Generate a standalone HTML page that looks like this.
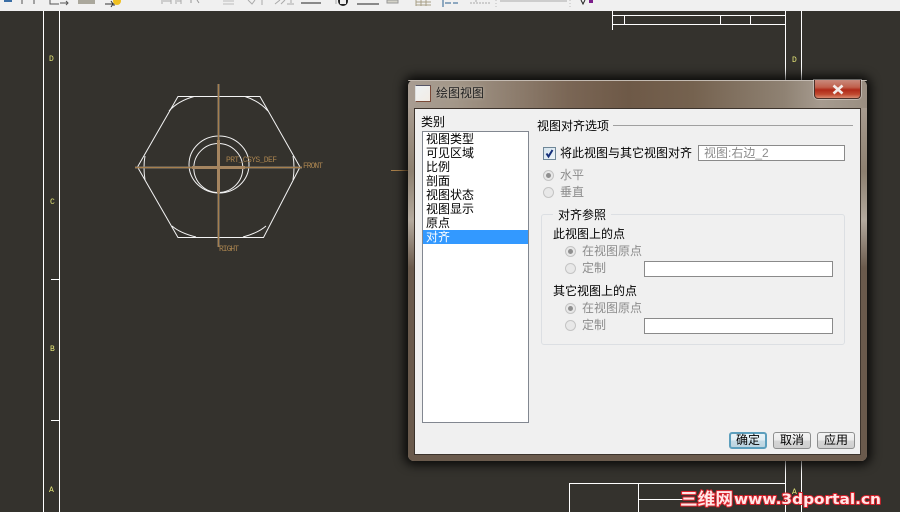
<!DOCTYPE html>
<html><head><meta charset="utf-8">
<style>
html,body{margin:0;padding:0;background:#34322d}
#p{position:relative;width:900px;height:512px;overflow:hidden;background:#34322d;font-family:"Liberation Sans","WenQuanYi Zen Hei","Noto Sans CJK SC",sans-serif;font-size:12px;line-height:14px;color:#000}
.a{position:absolute;white-space:nowrap}
.g{color:#8c8c8c}
.r{position:absolute;width:11px;height:11px;border-radius:50%;box-sizing:border-box;border:1px solid #c4c4c4;background:#e8e8e8}
.r.on::after{content:"";position:absolute;left:2px;top:2px;width:5px;height:5px;border-radius:50%;background:#8f8f8f}
.i{position:absolute;height:15px;box-sizing:border-box;background:#fff;border:1px solid #8a8a8a}
.b{position:absolute;top:432px;height:17px;box-sizing:border-box;border:1px solid #8e8f8f;border-radius:3px;background:linear-gradient(#f4f4f4 0,#ebebeb 50%,#d6d6d6 51%,#cfcfcf 100%);text-align:center;line-height:15px}
</style></head><body><div id="p">

<div class="a" style="left:0;top:0;width:900px;height:11px;background:#f0f0f0"></div>
<svg class="a" style="left:0;top:0" width="900" height="512" viewBox="0 0 900 512" fill="none">
<g stroke="#777" stroke-width="1">
<path d="M22 0v4M34 0v4M50 0v4H59M60 3h8M66 1l2 2-2 2" stroke="#555"/>
<rect x="78" y="0" width="17" height="4" fill="#aaa79c" stroke="none"/>
<path d="M105 4h8M111 1l2 3-2 3M114 1v5" stroke="#333"/>
<path d="M162 0v4M171 0v4M176 0v4M181 0v4M163 1h8M177 1h4" stroke="#aaa"/>
<path d="M191 0v3M197 0l2 3" stroke="#999"/>
<path d="M223 1h11M223 4h11" stroke="#bbb"/>
<path d="M248 0l4 4 3-4M262 0v5" stroke="#aaa"/>
<path d="M275 4l5-4M281 4l4-4M287 4h7M291 0v3" stroke="#aaa"/>
<path d="M301 3h20" stroke="#222"/>
<path d="M336 0v4" stroke="#aaa"/>
<path d="M357 4h22" stroke="#222"/>
<rect x="387" y="0" width="11" height="3" fill="#d4d2c8" stroke="#999"/>
<path d="M416 0v6M421 0v6M426 0v6M416 2h15M416 5h15" stroke="#a89f86"/>
<path d="M443 0v7M445 3h6M453 3h5" stroke="#2a5f90"/>
<path d="M470 3h20M476 0v2" stroke="#aaa" stroke-dasharray="2 1"/>
<path d="M496 0v9M570 0v9" stroke="#bbb" stroke-dasharray="1 2"/>
<path d="M500 1h67" stroke="#aaa"/>
<path d="M581 0l2 4 2-4" stroke="#222"/>
</g>
<circle cx="343" cy="1" r="5" fill="#222" stroke="none"/>
<rect x="340" y="0" width="6" height="4" fill="#eee"/>
<circle cx="117" cy="1" r="4" fill="#f0c020"/>
<rect x="589" y="0" width="4" height="3" fill="#7b1d8a"/>
<rect x="4" y="0" width="8" height="2" fill="#3a6ea5"/>

<g stroke="#fff" stroke-width="1">
<path d="M43.500 11V512M59.500 11V512M51 279.500H59M51 420.500H59"/>
<path d="M785.500 11V80M801.500 11V80M785.500 460V512M801.500 460V512"/>
<path d="M612.500 11V30M612.500 15.500H785M612.500 24.500H785M624.500 15V24M720.500 15V24M750.500 15V24"/>
<path d="M569.500 483V512M569.500 483.500H785M638.500 483V512M638.500 499.500H690"/>
</g>
<g fill="#e8e878" font-family="Liberation Mono" font-size="8">
<text x="49" y="61">D</text><text x="50" y="204">C</text><text x="50" y="351">B</text><text x="49" y="492">A</text>
<text x="792" y="62">D</text><text x="792" y="494">A</text>
</g>
<path d="M391 170.500H408" stroke="#a87f4a"/>

<g stroke="#f4f4f4" stroke-width="1">
<path d="M178 96.500H260L300 167 263.500 237.500H178L137.500 167Z"/>
<path d="M169 111Q178 101 194 96.500M245 96.500Q259 101 268 111"/>
<path d="M145 156Q143 167 145 180M293 156Q295 167 293 180"/>
<path d="M172 226Q180 233 196 237M243 237Q258 233 266 226"/>
<ellipse cx="219" cy="164.500" rx="30" ry="28.500"/>
<ellipse cx="218.300" cy="168" rx="24.500" ry="24.500"/>
</g>
<g>
<path d="M218.500 84V247M135 167.500H302" stroke="#8d8070" stroke-width="2"/>
<path d="M218.500 84V247M135 167.500H302" stroke="#a67f4d" stroke-width="1"/>
<path d="M218.500 140V193M192 167.500H245" stroke="#a58560" stroke-width="3"/>
</g>
<g fill="#a8834f" font-family="Liberation Mono" font-size="8">
<text x="226" y="162" textLength="51">PRT_CSYS_DEF</text>
<text x="303" y="168" textLength="20">FRONT</text>
<text x="219" y="251" textLength="20">RIGHT</text>
</g>
</svg>

<div class="a" style="left:408px;top:80px;width:459px;height:381px;border-radius:6px;box-shadow:0 0 10px 4px rgba(0,0,0,.8);background:linear-gradient(90deg,#a89d92 0,#a39789 10%,#7a6655 35%,#6e5947 48%,#75624f 62%,#8f8273 82%,#a69b8f 90%,#9a8e81 100%)">
  <div class="a" style="left:0;top:100px;width:459px;height:281px;border-radius:0 0 6px 6px;background:#6a5a4c"></div>
  <div class="a" style="left:0;top:28px;width:6px;height:160px;background:linear-gradient(#a79b8f,#8d8070 40%,#b4aa9e 70%,#6a5a4c)"></div>
  <div class="a" style="right:0;top:28px;width:6px;height:160px;background:linear-gradient(#a79b8f,#8d8070 40%,#b4aa9e 70%,#6a5a4c)"></div>
</div>
<div class="a" style="left:408px;top:80px;width:459px;height:1px;background:#c4bbb2;border-radius:6px 6px 0 0"></div>
<div class="a" style="left:814px;top:80px;width:47px;height:19px;box-sizing:border-box;border:1px solid #4a3028;border-top:none;border-radius:0 0 4px 4px;background:linear-gradient(#c98a7c 0,#c0604c 40%,#b02a18 55%,#c04a30 80%,#d88a70 100%);box-shadow:0 0 0 1px rgba(255,255,255,.35)"></div>
<svg class="a" style="left:831px;top:84px" width="14" height="11" viewBox="0 0 14 11"><path d="M2.500 1.500L11.500 9.500M11.500 1.500L2.500 9.500" stroke="#f2ecea" stroke-width="2.600"/></svg>
<div class="a" style="left:415px;top:85px;width:16px;height:17px;box-sizing:border-box;background:linear-gradient(135deg,#eef2f4,#f2ece4);border:1px solid #7b4a38;border-left-color:#ddd;border-top-color:#556"></div>
<div class="a" style="left:436px;top:86px;color:#222;text-shadow:0 0 3px #c8c0b6">绘图视图</div>
<div class="a" style="left:414px;top:108px;width:447px;height:347px;box-sizing:border-box;background:#f0f0f0;border:1px solid #3c332c"></div>

<div class="a" style="left:421px;top:115px">类别</div>
<div class="a" style="left:422px;top:131px;width:107px;height:292px;box-sizing:border-box;background:#fff;border:1px solid #828790"></div>
<div class="a" style="left:423px;top:230px;width:105px;height:14px;background:#3399ff"></div>
<div class="a" style="left:426px;top:132px">视图类型</div>
<div class="a" style="left:426px;top:146px">可见区域</div>
<div class="a" style="left:426px;top:160px">比例</div>
<div class="a" style="left:426px;top:174px">剖面</div>
<div class="a" style="left:426px;top:188px">视图状态</div>
<div class="a" style="left:426px;top:202px">视图显示</div>
<div class="a" style="left:426px;top:216px">原点</div>
<div class="a" style="left:426px;top:230px;color:#fff">对齐</div>

<div class="a" style="left:537px;top:119px">视图对齐选项</div>
<div class="a" style="left:613px;top:125px;width:240px;height:1px;background:#a0a0a0"></div>

<div class="a" style="left:543px;top:147px;width:13px;height:13px;box-sizing:border-box;border:1px solid #6f8798;background:linear-gradient(135deg,#d4e4ee,#eef4f8)"></div>
<svg class="a" style="left:543px;top:147px" width="13" height="13" viewBox="0 0 13 13"><path d="M3.500 6.500L5.500 9.500 9.500 3" stroke="#16307a" stroke-width="2" fill="none"/></svg>
<div class="a" style="left:560px;top:146px">将此视图与其它视图对齐</div>
<div class="i" style="left:698px;top:145px;width:147px;height:16px"></div>
<div class="a g" style="left:704px;top:146px">视图:右边_2</div>

<div class="r on" style="left:543px;top:170px"></div>
<div class="a g" style="left:560px;top:168px">水平</div>
<div class="r" style="left:543px;top:187px"></div>
<div class="a g" style="left:560px;top:185px">垂直</div>

<div class="a" style="left:541px;top:214px;width:304px;height:131px;box-sizing:border-box;border:1px solid #dcdfe3;border-radius:3px"></div>
<div class="a" style="left:553px;top:208px;background:#f0f0f0;padding:0 5px">对齐参照</div>

<div class="a" style="left:553px;top:227px">此视图上的点</div>
<div class="r on" style="left:565px;top:246px"></div>
<div class="a g" style="left:582px;top:244px">在视图原点</div>
<div class="r" style="left:565px;top:263px"></div>
<div class="a g" style="left:582px;top:261px">定制</div>
<div class="i" style="left:644px;top:261px;width:189px;height:16px"></div>

<div class="a" style="left:553px;top:284px">其它视图上的点</div>
<div class="r on" style="left:565px;top:303px"></div>
<div class="a g" style="left:582px;top:301px">在视图原点</div>
<div class="r" style="left:565px;top:320px"></div>
<div class="a g" style="left:582px;top:318px">定制</div>
<div class="i" style="left:644px;top:318px;width:189px;height:16px"></div>

<div class="b" style="left:729px;width:38px;border:2px solid #5d9fbd;line-height:13px;background:linear-gradient(#eaf4f8,#e0edf3 50%,#c6dbe6 51%,#bcd4e0)">确定</div>
<div class="b" style="left:773px;width:38px">取消</div>
<div class="b" style="left:817px;width:38px">应用</div>

<svg class="a" style="left:0;top:0" width="900" height="512" viewBox="0 0 900 512">
<g fill="#ffe6e6" stroke="#d8202a" stroke-width="2" paint-order="stroke" font-weight="bold" stroke-linejoin="round">
<text x="680" y="505" font-size="17" textLength="53" lengthAdjust="spacingAndGlyphs" font-family="'WenQuanYi Zen Hei','Noto Sans CJK SC',sans-serif">三维网</text>
<text x="734" y="504" font-size="14" textLength="147" lengthAdjust="spacingAndGlyphs" font-family="'DejaVu Sans',sans-serif">www.3dportal.cn</text>
</g>
</svg>
</div></body></html>
